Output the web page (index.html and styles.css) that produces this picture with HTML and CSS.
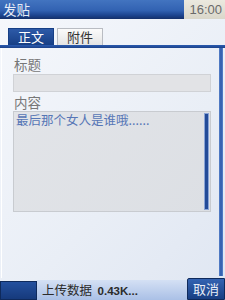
FILE: index.html
```html
<!DOCTYPE html>
<html>
<head>
<meta charset="utf-8">
<link rel="stylesheet" href="styles.css">
</head>
<body>
<div class="screen">
  <div class="titlebar">
    <div class="title">发贴</div>
    <div class="clock">16:00</div>
  </div>
  <div class="tabs">
    <div class="tab active">正文</div>
    <div class="tab">附件</div>
  </div>
  <div class="tabline"></div>
  <div class="body">
    <div class="panel">
      <div class="label">标题</div>
      <div class="input"></div>
      <div class="label label2">内容</div>
      <div class="textarea">
        <div class="text">最后那个女人是谁哦......</div>
        <div class="scroll"></div>
      </div>
    </div>
    <div class="rail"></div>
  </div>
  <div class="softkeys">
    <div class="sk-left"></div>
    <div class="sk-mid">上传数据&nbsp;&nbsp;<b>0.43K...</b></div>
    <div class="sk-right">取消</div>
  </div>
</div>
</body>
</html>
```
FILE: styles.css
```css
html, body {
  margin: 0;
  padding: 0;
}
body {
  font-family: "Noto Sans CJK SC", "DejaVu Sans", sans-serif;
  width: 225px;
  height: 300px;
  overflow: hidden;
}
.screen {
  width: 225px;
  height: 300px;
  display: flex;
  flex-direction: column;
  background: linear-gradient(135deg, #f6f8fc 0%, #e9eef6 60%, #dfe6f2 100%);
}
.titlebar {
  height: 19px;
  display: flex;
  flex-shrink: 0;
}
.title {
  flex: 1;
  background: linear-gradient(to bottom, #4274c0 0%, #3262b2 55%, #1d4590 80%, #14306a 100%);
  color: #e6ecf7;
  font-size: 13.5px;
  line-height: 18px;
  padding-left: 3px;
}
.clock {
  width: 41px;
  background: linear-gradient(to bottom, #ebe9df, #dad7ca);
  color: #6a6a6a;
  font-family: "Liberation Sans", sans-serif;
  font-size: 13px;
  line-height: 19px;
  text-align: right;
  padding-right: 3px;
  box-sizing: border-box;
}
.tabs {
  display: flex;
  gap: 3px;
  padding: 9px 0 0 8px;
  height: 17px;
  flex-shrink: 0;
}
.tab {
  width: 46px;
  height: 17px;
  box-sizing: border-box;
  font-size: 13px;
  line-height: 16px;
  text-align: center;
  color: #333;
  background: linear-gradient(to bottom, #fbfbfb, #e4e4e4);
  border: 1px solid #b9bcc2;
  border-bottom: none;
}
.tab.active {
  color: #ffffff;
  background: linear-gradient(to bottom, #2d5aa8, #173f85);
  border-color: #173f85;
}
.tabline {
  height: 3px;
  flex-shrink: 0;
  background: linear-gradient(to bottom, #2b5bb0, #1c428a);
}
.body {
  flex: 1;
  display: flex;
  min-height: 0;
}
.panel {
  flex: 1;
  padding: 8px 0 0 11px;
  border-left: 1px solid #ffffff;
  margin-left: 1px;
}
.label {
  font-size: 13.5px;
  line-height: 17px;
  color: #777777;
  padding-left: 1px;
}
.label2 {
  margin-top: 2px;
}
.input {
  width: 198px;
  height: 18px;
  box-sizing: border-box;
  margin-top: 1px;
  background: #e2e3e6;
  border: 1px solid #d0d2d6;
}
.textarea {
  width: 198px;
  height: 101px;
  box-sizing: border-box;
  background: linear-gradient(135deg, #e2e4e8, #dcdfe4);
  border: 1px solid #c8cbd0;
  display: flex;
  justify-content: space-between;
  padding: 1px 1px 1px 2px;
}
.text {
  font-size: 12.5px;
  line-height: 14px;
  color: #5676b6;
  white-space: nowrap;
}
.scroll {
  width: 3px;
  border: 1px solid #8aa4d6;
  background: #234b98;
  align-self: stretch;
}
.rail {
  width: 4px;
  margin-right: 2px;
  margin-bottom: 2px;
  background: linear-gradient(to right, #5a84cc, #2c58a8, #5a84cc);
}
.softkeys {
  height: 22px;
  display: flex;
  align-items: flex-end;
  flex-shrink: 0;
}
.sk-left {
  width: 37px;
  height: 19px;
  box-sizing: border-box;
  background: linear-gradient(to bottom, #24509e, #163a7c);
  border: 1px solid #0f2a5c;
}
.sk-mid {
  flex: 1;
  height: 20px;
  background: linear-gradient(to bottom, #d4e0f4, #aac0e6);
  color: #2b2b2b;
  font-size: 12.5px;
  line-height: 20px;
  padding-left: 5px;
  white-space: nowrap;
}
.sk-mid b {
  font-family: "Liberation Sans", sans-serif;
  font-size: 11.5px;
  font-weight: bold;
}
.sk-right {
  width: 38px;
  height: 22px;
  box-sizing: border-box;
  background: linear-gradient(to bottom, #3463b2, #183e82);
  border: 1px solid #0f2a5c;
  border-radius: 2px 0 0 0;
  color: #e8eef8;
  font-size: 13px;
  line-height: 20px;
  text-align: center;
}
```
